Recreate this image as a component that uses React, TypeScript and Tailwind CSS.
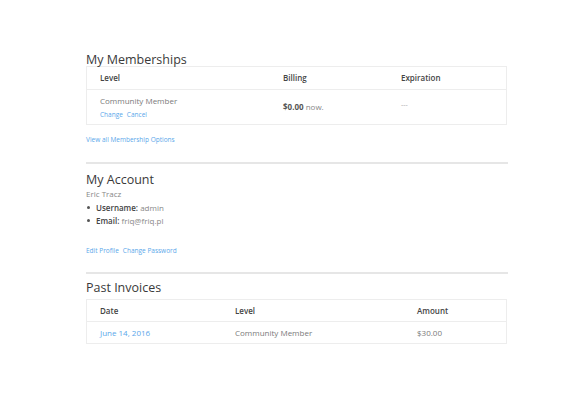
// Account overview: memberships, account details, past invoices

const font = { fontFamily: '"Open Sans", "Liberation Sans", sans-serif' };

function SectionTitle({ children }: { children: React.ReactNode }) {
    return <h2 className="text-[12.5px] leading-[16px] text-[#3a3a3a]">{children}</h2>;
}

export default function App() {
    return (
        <div className="min-h-[400px] bg-white" style={font}>
            <div className="ml-[86px] w-[422px] pt-[52px]">
                <SectionTitle>My Memberships</SectionTitle>
                <div className="-mt-[2px] w-[421px] border border-[#ededed]">
                    <div className="flex h-[23px] items-center border-b border-[#ededed] px-[13px] text-[8px] font-semibold text-[#444]">
                        <div className="w-[183px]">Level</div>
                        <div className="w-[118px]">Billing</div>
                        <div>Expiration</div>
                    </div>
                    <div className="flex h-[34px] items-center px-[13px]">
                        <div className="w-[183px]">
                            <div className="text-[8px] leading-[12px] text-[#7a7a7a]">Community Member</div>
                            <div className="mt-[3px] flex gap-[4px] text-[6.5px] leading-[10px] text-[#5aa7ea]">
                                <a>Change</a>
                                <a>Cancel</a>
                            </div>
                        </div>
                        <div className="w-[118px] text-[8px] text-[#888]">
                            <span className="font-bold text-[#555]">$0.00</span> now.
                        </div>
                        <div className="-mt-[3px] text-[7px] text-[#aaa]">---</div>
                    </div>
                </div>
                <a className="mt-[10px] block text-[6.5px] leading-[10px] text-[#5aa7ea]">View all Membership Options</a>

                <hr className="mt-[17px] border-t-2 border-[#e6e6e6]" />

                <div className="mt-[8px]">
                    <SectionTitle>My Account</SectionTitle>
                </div>
                <div className="text-[8px] leading-[12px] text-[#888]">Eric Tracz</div>
                <ul className="mt-[1px] text-[8px] leading-[13px] text-[#888]">
                    <li className="flex items-center">
                        <span className="mr-[6px] ml-[1px] inline-block h-[3px] w-[3px] rounded-full bg-[#555]" />
                        <span className="font-semibold text-[#444]">Username:</span>&nbsp;admin
                    </li>
                    <li className="flex items-center">
                        <span className="mr-[6px] ml-[1px] inline-block h-[3px] w-[3px] rounded-full bg-[#555]" />
                        <span className="font-semibold text-[#444]">Email:</span>&nbsp;friq@friq.pl
                    </li>
                </ul>
                <div className="mt-[19px] flex gap-[4px] text-[6.5px] leading-[10px] text-[#5aa7ea]">
                    <a>Edit Profile</a>
                    <a>Change Password</a>
                </div>

                <hr className="mt-[16px] border-t-2 border-[#e6e6e6]" />

                <div className="mt-[6px]">
                    <SectionTitle>Past Invoices</SectionTitle>
                </div>
                <div className="mt-[3px] w-[421px] border border-[#ededed]">
                    <div className="flex h-[22px] items-center border-b border-[#ededed] px-[13px] text-[8px] font-semibold text-[#444]">
                        <div className="w-[135px]">Date</div>
                        <div className="w-[182px]">Level</div>
                        <div>Amount</div>
                    </div>
                    <div className="flex h-[21px] items-center px-[13px] text-[8px] text-[#7a7a7a]">
                        <a className="w-[135px] text-[#5aa7ea]">June 14, 2016</a>
                        <div className="w-[182px]">Community Member</div>
                        <div>$30.00</div>
                    </div>
                </div>
            </div>
        </div>
    );
}
